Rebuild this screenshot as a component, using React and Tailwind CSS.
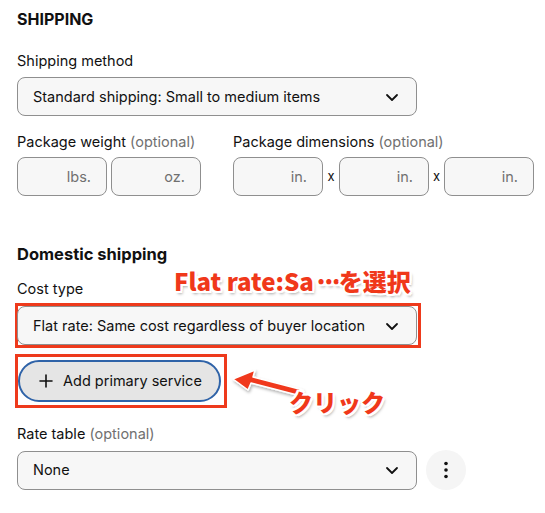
import React from "react";

const font = { fontFamily: "Inter, 'Noto Sans CJK JP', sans-serif" };

const Chevron = () => (
  <svg width="16" height="16" viewBox="0 0 16 16" fill="none">
    <path d="M3 6l5 5 5-5" stroke="#111" strokeWidth="1.8" strokeLinecap="round" strokeLinejoin="round" />
  </svg>
);

const Select = ({ value }) => (
  <div className="flex h-[39px] w-[400px] items-center justify-between rounded-lg border border-[#8f8f8f] bg-[#f7f7f7] pl-[15px] pr-[16px] text-[14.5px] text-[#111]">
    <span>{value}</span>
    <Chevron />
  </div>
);

const Box = ({ unit }) => (
  <div className="flex h-[39px] w-[90px] items-center justify-end rounded-lg border border-[#8f8f8f] bg-[#f7f7f7] pr-[15px] text-[14.5px] text-[#707070]">
    {unit}
  </div>
);

const annot = {
  fontFamily: "'Noto Sans CJK JP', sans-serif",
  color: "#f0381a",
  textShadow:
    "-2px -2px 0 #fff, 2px -2px 0 #fff, -2px 2px 0 #fff, 2px 2px 0 #fff, 0 -2px 0 #fff, 0 2px 0 #fff, -2px 0 0 #fff, 2px 0 0 #fff, 2px 3px 3px rgba(0,0,0,0.35)",
};

export default function App() {
  return (
    <div className="relative h-[513px] w-[545px] bg-white pl-[17px] pt-[9px] text-[#111]" style={font}>
      <h2 className="text-[16px] font-bold leading-[21px]">SHIPPING</h2>

      <div className="mt-[22px] text-[14.5px] leading-[18px]">Shipping method</div>
      <div className="mt-[7px]">
        <Select value="Standard shipping: Small to medium items" />
      </div>

      <div className="mt-[17px] flex">
        <div className="w-[216px]">
          <div className="text-[14.5px] leading-[18px]">
            Package weight <span className="text-[#707070]">(optional)</span>
          </div>
          <div className="mt-[6px] flex gap-[4px]">
            <Box unit="lbs." />
            <Box unit="oz." />
          </div>
        </div>
        <div>
          <div className="text-[14.5px] leading-[18px]">
            Package dimensions <span className="text-[#707070]">(optional)</span>
          </div>
          <div className="mt-[6px] flex items-center">
            <Box unit="in." />
            <span className="w-[16px] text-center text-[13px]">x</span>
            <Box unit="in." />
            <span className="w-[15px] text-center text-[13px]">x</span>
            <Box unit="in." />
          </div>
        </div>
      </div>

      <h3 className="mt-[48px] text-[16.5px] font-bold leading-[21px]">Domestic shipping</h3>
      <div className="mt-[15px] text-[14.5px] leading-[18px]">Cost type</div>

      <div className="ml-[-2px] mt-[5px] w-[406px] border-[3px] border-[#ee3a1c]">
        <div className="-ml-[1px]">
          <Select value="Flat rate: Same cost regardless of buyer location" />
        </div>
      </div>

      <div className="ml-[-2px] mt-[6px] flex h-[54px] w-[212px] items-center border-[3px] border-[#ee3a1c]">
        <button className="flex h-[42px] w-[203px] items-center gap-[10px] rounded-full border-2 border-[#2f63a8] bg-[#e5e5e5] pl-[19px] text-[14.5px] text-[#111]">
          <svg width="14" height="14" viewBox="0 0 14 14">
            <path d="M7 1v12M1 7h12" stroke="#111" strokeWidth="1.6" strokeLinecap="round" />
          </svg>
          Add primary service
        </button>
      </div>

      <div className="mt-[17px] text-[14.5px] leading-[18px]">
        Rate table <span className="text-[#707070]">(optional)</span>
      </div>
      <div className="mt-[7px] flex items-center gap-[9px]">
        <Select value="None" />
        <div className="flex h-[40px] w-[40px] items-center justify-center rounded-full bg-[#f5f5f5]">
          <svg width="4" height="18" viewBox="0 0 4 18">
            <circle cx="2" cy="2.5" r="1.8" fill="#111" />
            <circle cx="2" cy="9" r="1.8" fill="#111" />
            <circle cx="2" cy="15.5" r="1.8" fill="#111" />
          </svg>
        </div>
      </div>

      <div className="absolute left-[174px] top-[265px] whitespace-nowrap text-[24px] font-black leading-[32px]" style={annot}>
        Flat rate:Sa<span className="tracking-[-7px]">···</span><span className="ml-[2px]">を選択</span>
      </div>

      <svg className="absolute left-[228px] top-[369px]" width="80" height="32" viewBox="0 0 80 32">
        <defs>
          <filter id="sh" x="-20%" y="-30%" width="140%" height="160%">
            <feDropShadow dx="1" dy="2" stdDeviation="1.5" floodColor="#000" floodOpacity="0.3" />
          </filter>
        </defs>
        <path
          d="M5 10 L27 1 L25 8 L75 21 L73 27 L23 14 L20 21 Z"
          fill="#f0381a"
          stroke="#fff"
          strokeWidth="1.5"
          strokeLinejoin="round"
          filter="url(#sh)"
        />
      </svg>

      <div className="absolute left-[289px] top-[386px] text-[24px] font-black leading-[32px]" style={annot}>
        クリック
      </div>
    </div>
  );
}
